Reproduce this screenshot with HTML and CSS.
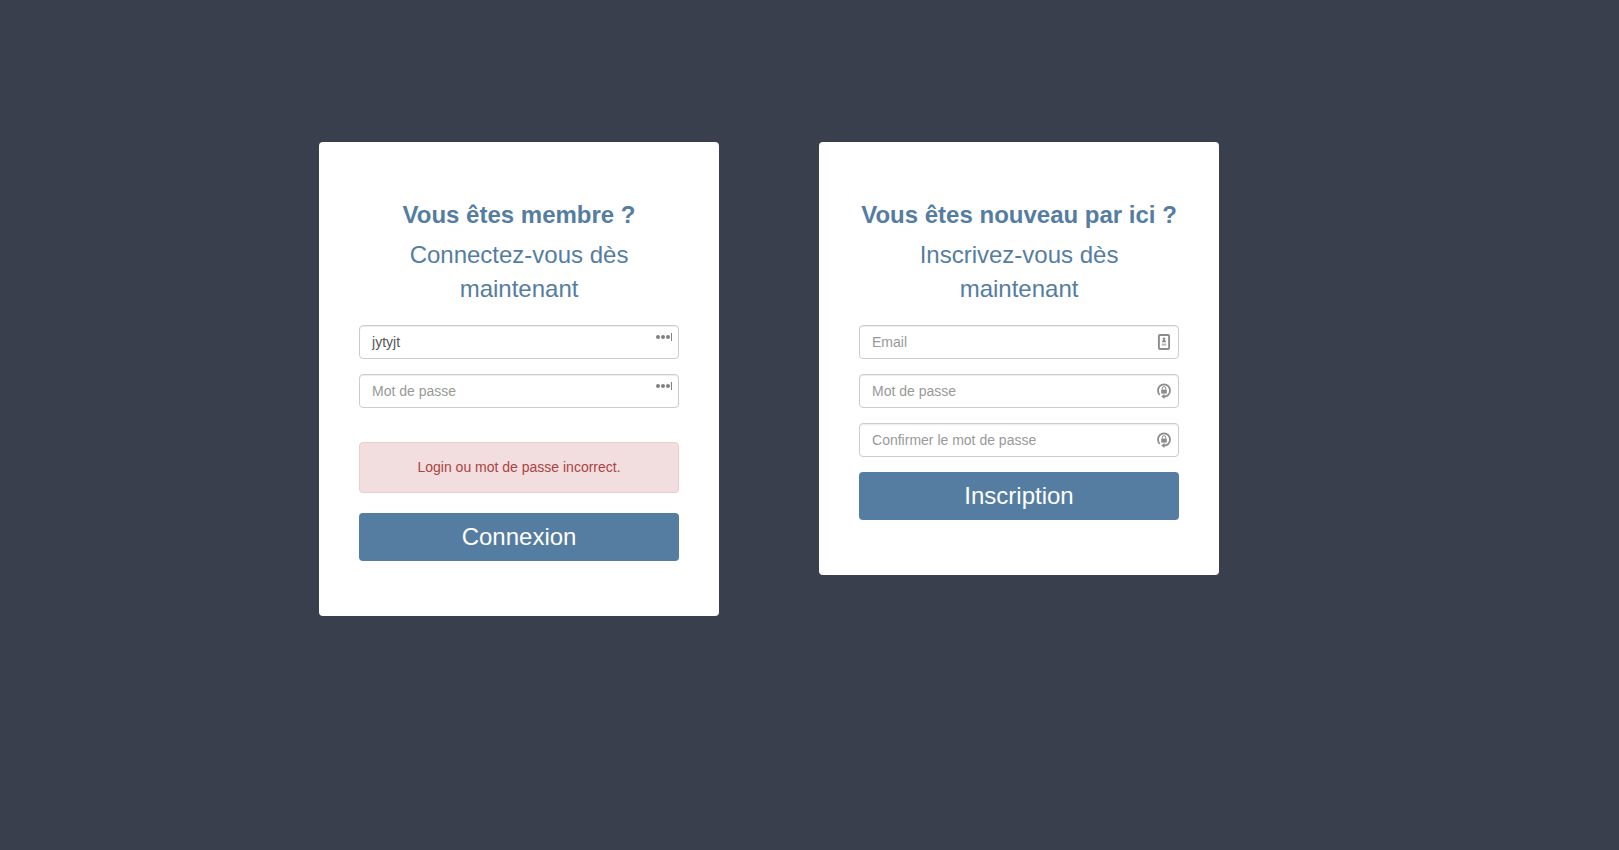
FILE: index.html
```html
<!DOCTYPE html>
<html lang="fr">
<head>
  <meta charset="utf-8">
  <meta name="viewport" content="width=device-width, initial-scale=1">
  <title>Connexion</title>
  <link rel="stylesheet" href="styles.css">
</head>
<body>
  <svg class="sprite" aria-hidden="true">
    <symbol id="icon-dots" viewBox="0 0 18 10">
      <circle cx="3" cy="5" r="2"/>
      <circle cx="8" cy="5" r="2"/>
      <circle cx="13" cy="5" r="2"/>
      <path d="M16 1h1v8h-1z"/>
    </symbol>
    <symbol id="icon-card" viewBox="0 0 16 16">
      <rect x="2.900" y="1" width="10.200" height="14" rx="1" fill="none" stroke="currentColor" stroke-width="1.900"/>
      <circle cx="8" cy="4.800" r="1.300"/>
      <path d="M5.900 8.300c0-1.500 1-2.500 2.100-2.500s2.100 1 2.100 2.500z"/>
      <path opacity=".6" d="M5.700 9.500h4.600v2.200H5.700z"/>
    </symbol>
    <symbol id="icon-lock" viewBox="0 0 16 16">
      <path fill="none" stroke="currentColor" stroke-width="1.800" d="M3.700 11.900A6 6.200 0 1 1 12.300 11.900Q10.800 13.500 8 13.500"/>
      <path d="M5.300 13.500l3.200-2.700v5.200z"/>
      <path d="M5.200 6.600h5.600v4H5.200z"/>
      <path fill="none" stroke="currentColor" d="M6.300 6.700V5.300a1.700 1.700 0 0 1 3.400 0v1.400"/>
    </symbol>
  </svg>

  <main class="page">
    <section class="card">
      <h1 class="title">Vous êtes membre ?</h1>
      <p class="subtitle">Connectez-vous dès maintenant</p>
      <form class="form">
        <div class="field">
          <input class="input" type="text" aria-label="Login" value="jytyjt">
          <svg class="icon icon-dots"><use href="#icon-dots"/></svg>
        </div>
        <div class="field">
          <input class="input" type="password" aria-label="Mot de passe" placeholder="Mot de passe">
          <svg class="icon icon-dots"><use href="#icon-dots"/></svg>
        </div>
        <div class="alert" role="alert">Login ou mot de passe incorrect.</div>
        <button class="button" type="submit">Connexion</button>
      </form>
    </section>

    <section class="card">
      <h1 class="title">Vous êtes nouveau par ici ?</h1>
      <p class="subtitle">Inscrivez-vous dès maintenant</p>
      <form class="form">
        <div class="field">
          <input class="input" type="email" aria-label="Email" placeholder="Email">
          <svg class="icon"><use href="#icon-card"/></svg>
        </div>
        <div class="field">
          <input class="input" type="password" aria-label="Mot de passe" placeholder="Mot de passe">
          <svg class="icon"><use href="#icon-lock"/></svg>
        </div>
        <div class="field">
          <input class="input" type="password" aria-label="Confirmer le mot de passe" placeholder="Confirmer le mot de passe">
          <svg class="icon"><use href="#icon-lock"/></svg>
        </div>
        <button class="button" type="submit">Inscription</button>
      </form>
    </section>
  </main>
</body>
</html>
```

FILE: styles.css
```css
* {
  box-sizing: border-box;
}

body {
  margin: 0;
  background: #393f4d;
  color: #557da1;
  font-family: "Liberation Sans", Arial, sans-serif;
  font-size: 14px;
  line-height: 20px;
}

.sprite {
  display: none;
}

.page {
  display: flex;
  flex-wrap: wrap;
  justify-content: center;
  align-items: flex-start;
  gap: 40px 100px;
  padding: 142px 5% 40px 0;
}

.card {
  width: 100%;
  max-width: 400px;
  padding: 56px 40px 55px;
  border-radius: 4px;
  background: #fff;
}

.title,
.subtitle {
  margin: 0;
  font-size: 24px;
  line-height: 34px;
  text-align: center;
}

.title {
  margin: 0 -8px 6px;
  font-weight: 700;
}

.subtitle {
  margin-bottom: 19px;
}

.form {
  display: flex;
  flex-direction: column;
  gap: 15px;
}

.field {
  position: relative;
}

.input {
  display: block;
  width: 100%;
  height: 34px;
  padding: 6px 12px;
  border: 1px solid #ccc;
  border-radius: 4px;
  background: #fff;
  box-shadow: inset 0 1px 1px rgba(0, 0, 0, 0.075);
  color: #555;
  font: inherit;
}

.input::placeholder {
  color: #999;
  opacity: 1;
}

.icon {
  position: absolute;
  top: 9px;
  right: 7px;
  width: 16px;
  height: 16px;
  color: #8c8c8c;
  fill: currentColor;
  pointer-events: none;
}

.icon-dots {
  top: 7px;
  right: 6px;
  width: 18px;
  height: 10px;
  color: #808080;
}

.alert {
  margin: 19px 0 5px;
  padding: 15px;
  border: 1px solid #ebccd1;
  border-radius: 4px;
  background: #f2dede;
  color: #a94442;
  line-height: 19px;
  text-align: center;
}

.button {
  width: 100%;
  height: 48px;
  padding: 6px 12px;
  border: 0;
  border-radius: 4px;
  background: #557da1;
  color: #fff;
  font-family: inherit;
  font-size: 24px;
  line-height: 34px;
  cursor: pointer;
}
```
